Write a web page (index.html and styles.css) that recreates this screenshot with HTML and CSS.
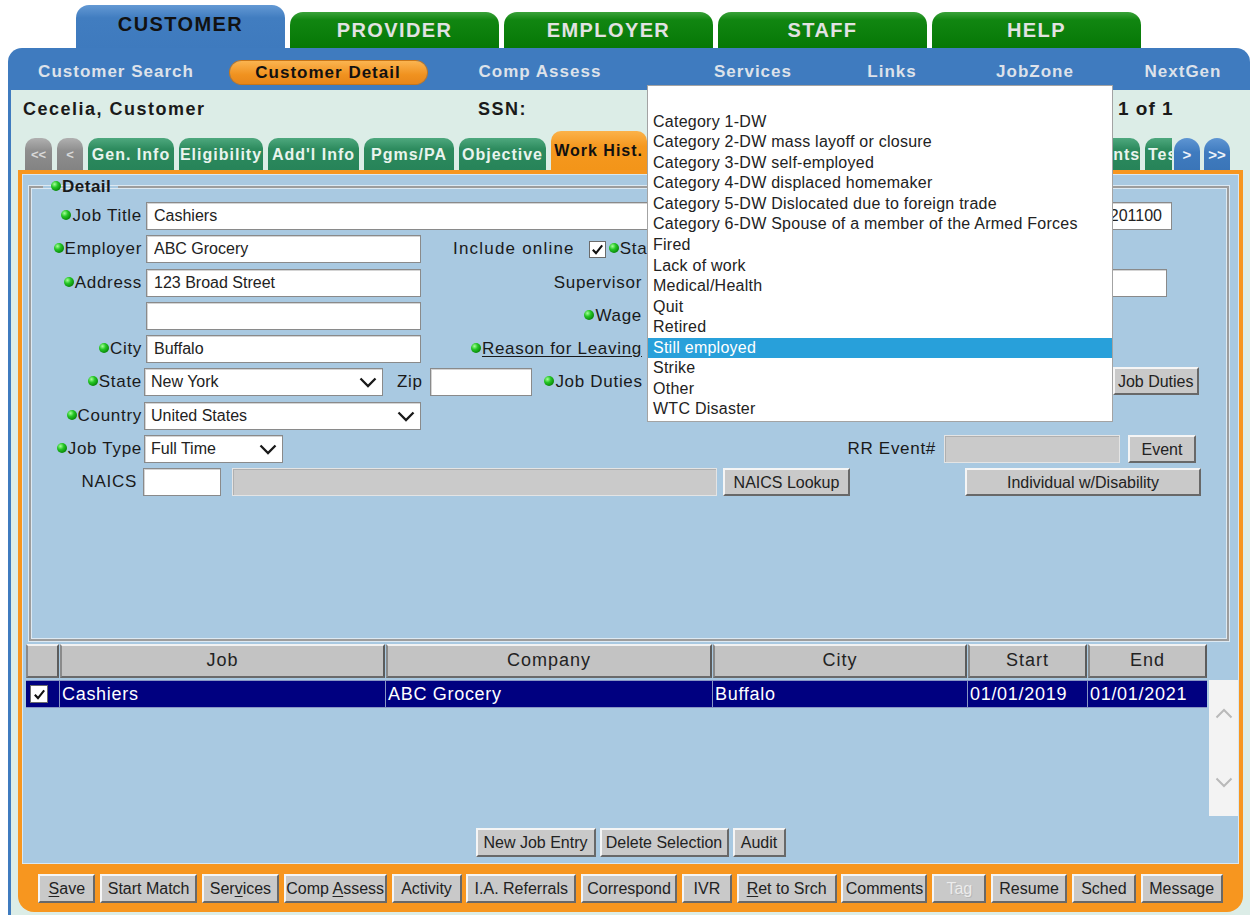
FILE: index.html
```html
<!DOCTYPE html>
<html lang="en">
<head>
<meta charset="utf-8">
<title>Customer Detail - Work History</title>
<link rel="stylesheet" href="styles.css">
</head>
<body>
<div class="app">

  <nav class="module-tabs">
    <a class="module-tab is-active">CUSTOMER</a>
    <a class="module-tab">PROVIDER</a>
    <a class="module-tab">EMPLOYER</a>
    <a class="module-tab">STAFF</a>
    <a class="module-tab">HELP</a>
  </nav>

  <nav class="menu-bar">
    <a class="menu-item">Customer Search</a>
    <a class="menu-item is-current"><span>Customer Detail</span></a>
    <a class="menu-item">Comp Assess</a>
    <a class="menu-item">Services</a>
    <a class="menu-item">Links</a>
    <a class="menu-item">JobZone</a>
    <a class="menu-item">NextGen</a>
  </nav>

  <main class="workspace">
    <header class="record-head">
      <span class="customer-name">Cecelia, Customer</span>
      <span class="ssn">SSN:</span>
      <span class="record-count">1 of 1</span>
    </header>

    <div class="page-tabs">
      <div class="tab-track">
        <a class="page-tab nav-tab">&lt;&lt;</a>
        <a class="page-tab nav-tab">&lt;</a>
        <a class="page-tab">Gen. Info</a>
        <a class="page-tab">Eligibility</a>
        <a class="page-tab">Add'l Info</a>
        <a class="page-tab">Pgms/PA</a>
        <a class="page-tab">Objective</a>
        <a class="page-tab is-active">Work Hist.</a>
        <a class="page-tab">Education</a>
        <a class="page-tab">Training</a>
        <a class="page-tab">Licenses</a>
        <a class="page-tab">Skills</a>
        <a class="page-tab">Documents</a>
        <a class="page-tab cut-tab">Tests</a>
      </div>
      <a class="page-tab step-tab">&gt;</a>
      <a class="page-tab step-tab step-last">&gt;&gt;</a>
    </div>

    <section class="record-panel">
      <div class="panel-body">
        <fieldset class="detail">
          <legend><i class="dot"></i>Detail</legend>

          <div class="row">
            <label class="lbl"><i class="dot"></i>Job Title</label>
            <input class="field field-title" value="Cashiers">
            <input class="field field-onet" value="41201100">
          </div>

          <div class="row">
            <label class="lbl"><i class="dot"></i>Employer</label>
            <input class="field field-std" value="ABC Grocery">
            <span class="inline-lbl online-lbl">Include online</span>
            <span class="check online-check"><svg viewBox="0 0 16 16" width="15" height="15"><path d="M3 8.2 L6.4 11.8 L13 3.6" fill="none" stroke="#111" stroke-width="2.2"/></svg></span>
            <span class="inline-lbl start-lbl"><i class="dot"></i>Start Date</span>
            <input class="field field-date" value="">
          </div>

          <div class="row">
            <label class="lbl"><i class="dot"></i>Address</label>
            <input class="field field-std" value="123 Broad Street">
            <span class="mid-lbl">Supervisor</span>
            <input class="field field-super" value="">
            <input class="field field-phone" value="">
          </div>

          <div class="row">
            <label class="lbl"></label>
            <input class="field field-std" value="">
            <span class="mid-lbl"><i class="dot"></i>Wage</span>
            <input class="field field-wage" value="">
          </div>

          <div class="row">
            <label class="lbl"><i class="dot"></i>City</label>
            <input class="field field-std" value="Buffalo">
            <span class="mid-lbl"><i class="dot"></i><u>Reason for Leaving</u></span>
            <div class="select select-reason"><span>Still employed</span></div>
          </div>

          <div class="row">
            <label class="lbl"><i class="dot"></i>State</label>
            <div class="select select-state"><span>New York</span><svg class="chev" width="18" height="11" viewBox="0 0 18 11"><path d="M1.5 1.5 L9 9 L16.5 1.5" fill="none" stroke="#1a1a1a" stroke-width="2.3"/></svg></div>
            <span class="inline-lbl zip-lbl">Zip</span>
            <input class="field field-zip" value="">
            <span class="duties-lbl"><i class="dot"></i>Job Duties</span>
            <textarea class="field duties-box"></textarea>
            <button class="btn btn-duties">Job Duties</button>
          </div>

          <div class="row">
            <label class="lbl"><i class="dot"></i>Country</label>
            <div class="select select-country"><span>United States</span><svg class="chev" width="18" height="11" viewBox="0 0 18 11"><path d="M1.5 1.5 L9 9 L16.5 1.5" fill="none" stroke="#1a1a1a" stroke-width="2.3"/></svg></div>
          </div>

          <div class="row">
            <label class="lbl"><i class="dot"></i>Job Type</label>
            <div class="select select-type"><span>Full Time</span><svg class="chev" width="18" height="11" viewBox="0 0 18 11"><path d="M1.5 1.5 L9 9 L16.5 1.5" fill="none" stroke="#1a1a1a" stroke-width="2.3"/></svg></div>
            <span class="rr-lbl">RR Event#</span>
            <input class="field field-gray field-rr" value="" disabled>
            <button class="btn btn-event">Event</button>
          </div>

          <div class="row">
            <label class="lbl lbl-naics">NAICS</label>
            <input class="field field-naics" value="">
            <input class="field field-gray field-naics-desc" value="" disabled>
            <button class="btn btn-naics">NAICS Lookup</button>
            <button class="btn btn-disability">Individual w/Disability</button>
          </div>
        </fieldset>

        <div class="history">
          <div class="grid-head">
            <div class="hcell"></div>
            <div class="hcell">Job</div>
            <div class="hcell">Company</div>
            <div class="hcell">City</div>
            <div class="hcell">Start</div>
            <div class="hcell">End</div>
          </div>
          <div class="grid-body">
            <div class="grid-rows">
              <div class="grid-row is-selected">
                <div class="cell cell-check"><span class="check"><svg viewBox="0 0 16 16" width="15" height="15"><path d="M3 8.2 L6.4 11.8 L13 3.6" fill="none" stroke="#111" stroke-width="2.2"/></svg></span></div>
                <div class="cell">Cashiers</div>
                <div class="cell">ABC Grocery</div>
                <div class="cell">Buffalo</div>
                <div class="cell">01/01/2019</div>
                <div class="cell">01/01/2021</div>
              </div>
            </div>
            <div class="vscroll">
              <svg width="18" height="11" viewBox="0 0 18 11"><path d="M1.5 9.5 L9 2 L16.5 9.5" fill="none" stroke="#b9b9b9" stroke-width="2"/></svg>
              <svg width="18" height="11" viewBox="0 0 18 11"><path d="M1.5 1.5 L9 9 L16.5 1.5" fill="none" stroke="#b9b9b9" stroke-width="2"/></svg>
            </div>
          </div>
        </div>

        <div class="history-actions">
          <button class="btn">New Job Entry</button>
          <button class="btn">Delete Selection</button>
          <button class="btn">Audit</button>
        </div>
      </div>

      <div class="record-actions">
        <button class="btn"><u>S</u>ave</button>
        <button class="btn">Start Match</button>
        <button class="btn">Ser<u>v</u>ices</button>
        <button class="btn">Comp <u>A</u>ssess</button>
        <button class="btn">Activity</button>
        <button class="btn">I.A. Referrals</button>
        <button class="btn">Correspond</button>
        <button class="btn">IVR</button>
        <button class="btn"><u>R</u>et to Srch</button>
        <button class="btn">Comments</button>
        <button class="btn is-disabled">Tag</button>
        <button class="btn">Resume</button>
        <button class="btn">Sched</button>
        <button class="btn">Message</button>
      </div>
    </section>
  </main>

  <ul class="reason-list">
    <li></li>
    <li>Category 1-DW</li>
    <li>Category 2-DW mass layoff or closure</li>
    <li>Category 3-DW self-employed</li>
    <li>Category 4-DW displaced homemaker</li>
    <li>Category 5-DW Dislocated due to foreign trade</li>
    <li>Category 6-DW Spouse of a member of the Armed Forces</li>
    <li>Fired</li>
    <li>Lack of work</li>
    <li>Medical/Health</li>
    <li>Quit</li>
    <li>Retired</li>
    <li class="is-selected">Still employed</li>
    <li>Strike</li>
    <li>Other</li>
    <li>WTC Disaster</li>
  </ul>
</div>
</body>
</html>
```

FILE: styles.css
```css
* { box-sizing: border-box; }

html, body {
  margin: 0;
  padding: 0;
  background: #ffffff;
}

body {
  font-family: "Liberation Sans", Arial, sans-serif;
  color: #1a1a1a;
}

.app {
  position: relative;
  width: 1250px;
  height: 915px;
  overflow: hidden;
}

/* ---------- module tabs ---------- */
.module-tabs {
  display: flex;
  align-items: flex-end;
  gap: 5px;
  height: 48px;
  padding-left: 76px;
}

.module-tab {
  width: 209px;
  height: 36px;
  border-radius: 13px 13px 0 0;
  background: linear-gradient(#3aa23a 0%, #118611 22%, #067806 100%);
  color: #e2e2e2;
  font-weight: bold;
  font-size: 20px;
  letter-spacing: 1.4px;
  text-align: center;
  line-height: 37px;
}

.module-tab.is-active {
  height: 43px;
  background: linear-gradient(#6399d4 0%, #417dc0 30%, #3e7abe 100%);
  color: #111;
  line-height: 39px;
}

/* ---------- menu bar ---------- */
.menu-bar {
  margin-left: 8px;
  height: 42px;
  background: #3f7bbf;
  border-radius: 14px 14px 0 0;
  display: grid;
  grid-template-columns: 216px 208px 216px 210px 68px 218px 78px;
  align-items: center;
  padding-top: 6px;
}

.menu-item {
  text-align: center;
  font-weight: bold;
  font-size: 17px;
  letter-spacing: 1px;
  color: #dde2ea;
  white-space: nowrap;
}

.menu-item.is-current span {
  display: inline-block;
  width: 197px;
  height: 23px;
  line-height: 23px;
  border-radius: 12px;
  background: linear-gradient(#fbb450, #f0921f 60%, #e8861a);
  color: #111;
  box-shadow: 0 0 0 1px #c87618;
}

/* ---------- workspace ---------- */
.workspace {
  margin-left: 8px;
  height: 825px;
  background: #dcede7;
  border-left: 3px solid #3f7bbf;
}

.record-head {
  display: grid;
  grid-template-columns: 455px 640px auto;
  height: 43px;
  padding: 8px 0 0 12px;
  font-weight: bold;
  font-size: 18px;
  letter-spacing: 1.5px;
  line-height: 22px;
}

.record-count { font-size: 19px; letter-spacing: 1px; }

/* ---------- page tabs ---------- */
.page-tabs {
  display: flex;
  align-items: flex-end;
  height: 37px;
  padding-left: 14px;
}

.tab-track {
  display: grid;
  grid-auto-flow: column;
  grid-template-columns: 27px 26px 86px 84px 91px 90px 87px 96px 96px 96px 90px 90px 96px 150px;
  column-gap: 5px;
  align-items: end;
  width: 1147px;
  overflow: hidden;
}

.page-tab {
  display: block;
  height: 32px;
  border-radius: 10px 10px 0 0;
  background: linear-gradient(#4ea87e 0%, #2d8b5e 35%, #25805322 100%), #27845a;
  color: #e9f4ee;
  font-weight: bold;
  font-size: 16px;
  letter-spacing: 1px;
  text-align: center;
  line-height: 34px;
  white-space: nowrap;
  overflow: hidden;
}

.page-tab.nav-tab {
  background: linear-gradient(#b0b0b0, #8e8e8e 40%, #838383);
  color: #d8d8d8;
  font-size: 13px;
  letter-spacing: 0;
}

.page-tab.is-active {
  height: 39px;
  background: linear-gradient(#fbb24a, #f5981f 40%, #f39519);
  color: #111;
  line-height: 40px;
  padding-right: 4px;
  text-align: right;
}

.page-tab.cut-tab {
  text-align: left;
  padding-left: 3px;
}

.page-tab.step-tab {
  width: 26px;
  margin-left: 2px;
  border-radius: 13px 13px 0 0;
  background: linear-gradient(#5e95d3, #3f7bbf 45%, #3a75b8);
  color: #eef3fa;
  font-size: 15px;
  letter-spacing: 0;
}

.page-tab.step-last { margin-left: 4px; }

/* ---------- record panel ---------- */
.record-panel {
  margin-left: 7px;
  width: 1225px;
  height: 742px;
  background: #f7961f;
  border-radius: 0 0 16px 16px;
  padding: 4px 4px 0;
}

.panel-body {
  height: 690px;
  background: #a9c9e1;
  border: 1px solid #d8e8f3;
  padding-top: 1px;
}

/* ---------- detail fieldset ---------- */
.detail {
  margin: 1px 0 0 6px;
  width: 1200px;
  height: 464px;
  padding: 2.5px 4px 0;
  border: 2px solid #9d9d9d;
  box-shadow: 0 0 0 1px #dde9f2, inset 0 0 0 1px #dde9f2;
  min-inline-size: 0;
}

.detail legend {
  margin-left: 8px;
  padding: 0 7px 0 8px;
  font-weight: bold;
  font-size: 17px;
  letter-spacing: 0.5px;
  line-height: 20px;
}

.dot {
  display: inline-block;
  width: 10px;
  height: 10px;
  border-radius: 50%;
  margin-right: 1px;
  vertical-align: 1px;
  background: radial-gradient(circle at 35% 32%, #a6ff9a 0%, #26c726 35%, #0b8f0b 70%, #056005 100%);
}

.row {
  display: flex;
  align-items: center;
  height: 33.25px;
  font-size: 17px;
  letter-spacing: 0.7px;
  white-space: nowrap;
}

.lbl {
  flex: none;
  width: 107px;
  margin-right: 4px;
  text-align: right;
}

.lbl-naics { padding-right: 5px; }

.field {
  flex: none;
  height: 28px;
  border: 1px solid #8a8a8a;
  box-shadow: inset 1px 1px 0 #d4d4d4;
  background: #ffffff;
  padding: 0 0 0 7px;
  margin: 0;
  font-family: "Liberation Sans", Arial, sans-serif;
  font-size: 16px;
  letter-spacing: 0;
  color: #222;
  outline: none;
}

.field-gray { background: #cacaca; border-color: #e4e4e4; box-shadow: inset 1px 1px 0 #b0b0b0; }

.field-title { width: 933px; }
.field-onet { width: 85px; margin-left: 8px; padding-left: 4px; }
.field-std { width: 275px; }
.field-date { width: 150px; margin-left: 6px; }
.field-super { width: 410px; margin-left: 5px; }
.field-phone { width: 83px; margin-left: 25px; }
.field-wage { width: 200px; margin-left: 5px; }
.field-zip { width: 102px; margin-left: 7px; }
.field-rr { width: 176px; margin-left: 8px; }
.field-naics { width: 78px; margin-left: -3px; }
.field-naics-desc { width: 485px; margin-left: 11px; }

.inline-lbl { flex: none; }
.online-lbl { margin-left: 32px; letter-spacing: 1.2px; }
.start-lbl { margin-left: 3px; }
.zip-lbl { margin-left: 14px; }

.check {
  flex: none;
  display: inline-flex;
  align-items: center;
  justify-content: center;
  width: 17px;
  height: 17px;
  background: #fff;
  border: 1px solid #6b6b6b;
}

.online-check { margin-left: 14px; }

.mid-lbl {
  flex: none;
  width: 223px;
  text-align: right;
  padding-right: 2px;
}

.mid-lbl u { text-underline-offset: 2px; }

.duties-lbl {
  flex: none;
  width: 113px;
  text-align: right;
  padding-right: 2px;
}

.rr-lbl {
  flex: none;
  width: 653px;
  text-align: right;
}

.select {
  flex: none;
  position: relative;
  display: flex;
  align-items: center;
  height: 28px;
  margin-left: -2px;
  padding-left: 6px;
  background: #fff;
  border: 1px solid #8a8a8a;
  box-shadow: inset 1px 1px 0 #d4d4d4;
  font-size: 16px;
  letter-spacing: 0;
  color: #222;
}

.select .chev {
  position: absolute;
  right: 5px;
  top: 8px;
}

.select-state { width: 239px; }
.select-country { width: 277px; }
.select-type { width: 139px; }
.select-reason { width: 300px; margin-left: 5px; }

.duties-box {
  align-self: flex-start;
  margin-top: 0;
  margin-left: 5px;
  width: 463px;
  height: 56px;
  resize: none;
}

/* ---------- buttons ---------- */
.btn {
  flex: none;
  height: 29px;
  padding: 0;
  background: #c9c9c9;
  border: 2px solid;
  border-color: #f5f5f5 #686868 #686868 #f5f5f5;
  font-family: "Liberation Sans", Arial, sans-serif;
  font-size: 16px;
  letter-spacing: 0;
  color: #222;
  text-align: center;
  line-height: 25px;
  white-space: nowrap;
}

.btn u { text-underline-offset: 2px; }

.btn.is-disabled { color: #ececec; text-shadow: 1px 1px 0 #b8b8b8; }

.btn-duties { width: 86px; height: 28px; margin-top: -2px; }
.btn-event { width: 68px; height: 28px; margin-left: 8px; }
.btn-naics { width: 127px; height: 28px; margin-left: 6px; }
.btn-disability { width: 236px; height: 28px; margin-left: 115px; }

/* ---------- history grid ---------- */
.history {
  margin: 3px 0 0 3px;
}

.grid-head,
.grid-row {
  display: grid;
  grid-template-columns: 33px 325px 326px 254px 119px 119px;
  column-gap: 1px;
  width: 1181px;
}

.grid-head { height: 34px; }

.hcell {
  background: #c3c3c3;
  border: 2px solid;
  border-color: #f2f2f2 #5c5c5c #6a6a6a #8a8a8a;
  text-align: center;
  font-size: 18px;
  letter-spacing: 1px;
  line-height: 29px;
  color: #222;
}

.grid-body {
  display: flex;
  margin-top: 2px;
  height: 136px;
}

.grid-rows { width: 1181px; }

.grid-row {
  height: 28px;
  background: #8795c4;
  border-top: 1px solid #8795c4;
  border-bottom: 1px solid #8795c4;
}

.cell {
  background: #000080;
  color: #ffffff;
  font-size: 18px;
  letter-spacing: 0.7px;
  line-height: 26px;
  padding-left: 2px;
  white-space: nowrap;
  overflow: hidden;
}

.cell-check {
  display: flex;
  align-items: center;
  padding-left: 4px;
}

.cell-check .check { width: 18px; height: 18px; }

.vscroll {
  margin-left: 2px;
  width: 30px;
  height: 136px;
  background: #f3f3f3;
  display: flex;
  flex-direction: column;
  align-items: center;
  justify-content: space-between;
  padding: 28px 0 28px;
}

.history-actions {
  display: flex;
  justify-content: center;
  gap: 4px;
  margin-top: 12px;
}

.history-actions .btn:nth-child(1) { width: 120px; }
.history-actions .btn:nth-child(2) { width: 129px; }
.history-actions .btn:nth-child(3) { width: 53px; }

/* ---------- record actions ---------- */
.record-actions {
  display: grid;
  grid-template-columns: 57px 97px 77px 103px 70px 110px 96px 50px 100px 86px 54px 76px 64px 82px;
  column-gap: 4.8px;
  justify-content: center;
  padding-top: 10px;
}

/* ---------- reason for leaving list ---------- */
.reason-list {
  position: absolute;
  left: 647px;
  top: 85px;
  width: 466px;
  height: 337px;
  margin: 0;
  padding: 5px 0 0;
  list-style: none;
  background: #ffffff;
  border: 1px solid #a3a3a3;
  font-size: 16px;
  letter-spacing: 0.25px;
  color: #222;
}

.reason-list li {
  height: 20.57px;
  line-height: 20.57px;
  padding-left: 5px;
  white-space: nowrap;
}

.reason-list li.is-selected {
  background: #28a0da;
  color: #ffffff;
}
```
